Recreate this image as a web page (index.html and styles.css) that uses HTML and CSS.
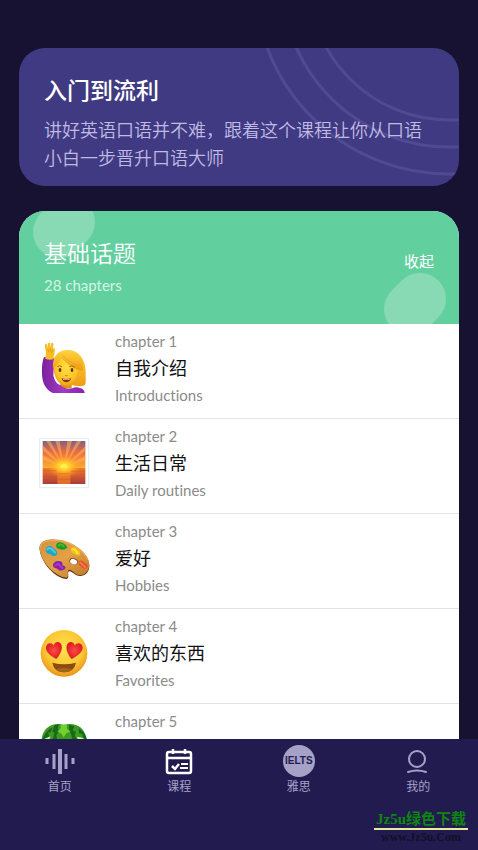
FILE: index.html
```
<!DOCTYPE html>
<html lang="zh-CN">
<head>
    <meta charset="UTF-8">
    <meta name="viewport" content="width=device-width, initial-scale=1">
    <title>课程</title>
    <link rel="stylesheet" href="styles.css">
</head>
<body>
    <main class="content">
        <section class="intro">
            <svg class="intro-rings" viewBox="0 0 180 138" aria-hidden="true">
                <circle cx="170" cy="-68" r="194"/>
                <circle cx="170" cy="-68" r="167"/>
                <circle cx="170" cy="-68" r="140"/>
            </svg>
            <h1>入门到流利</h1>
            <p>讲好英语口语并不难，跟着这个课程让你从口语小白一步晋升口语大师</p>
        </section>

        <section class="topic">
            <div class="topic-head">
                <svg class="blob blob-left" viewBox="0 0 100 113" aria-hidden="true">
                    <path d="M50 11L40 21"/>
                </svg>
                <svg class="blob blob-right" viewBox="0 0 100 113" aria-hidden="true">
                    <path d="M61 88L51 98"/>
                </svg>
                <div class="topic-title">
                    <h2>基础话题</h2>
                    <p>28 chapters</p>
                </div>
                <button class="toggle" type="button">收起</button>
            </div>
            <ul class="chapters">
                <li>
                    <svg class="emoji" viewBox="57 54 156 156" aria-hidden="true">
                        <defs>
                            <linearGradient id="hair" x1="0" y1="0" x2="0" y2="1">
                                <stop offset="0" stop-color="#ffd440"/>
                                <stop offset="1" stop-color="#f09c12"/>
                            </linearGradient>
                            <radialGradient id="face" cx=".5" cy=".4" r=".6">
                                <stop offset="0" stop-color="#ffdf45"/>
                                <stop offset=".7" stop-color="#fcc427"/>
                                <stop offset="1" stop-color="#e99a18"/>
                            </radialGradient>
                            <linearGradient id="sleeve" x1="0" y1="0" x2="1" y2="0">
                                <stop offset="0" stop-color="#7a219d"/>
                                <stop offset=".5" stop-color="#a13bc4"/>
                                <stop offset="1" stop-color="#8424aa"/>
                            </linearGradient>
                        </defs>
                        <path d="M100 132C94 98 112 76 140 75C176 73 198 104 197 142C196 162 200 172 194 181C181 186 163 184 152 178L110 160Z" fill="url(#hair)"/>
                        <path d="M121 166H155V190H121Z" fill="#df8f14"/>
                        <path d="M72 96C65 114 65 139 67 158C70 184 85 197 98 204H194C194 194 184 187 164 187C147 196 130 189 121 180C109 177 103 165 100 151L103 100Z" fill="url(#sleeve)"/>
                        <path d="M76 101L78 82L74 61Q75 55 80 57L84 70L83 53Q87 47 90 53L91 69L94 53Q99 50 100 57L99 74L101 69Q107 70 104 80L100 103Q87 106 76 101Z" fill="#f9bd24"/>
                        <path d="M84 72L86 82M91 70V80M98 74L94 84" fill="none" stroke="#df8e14" stroke-width="2"/>
                        <path d="M101 130C100 101 114 87 139 88C165 90 179 107 178 135C176 167 162 184 140 184C118 182 102 160 101 130Z" fill="url(#face)"/>
                        <path d="M99 128C96 98 114 76 143 76C173 77 193 101 189 137C167 135 140 119 124 95C120 109 112 122 99 128Z" fill="url(#hair)"/>
                        <path d="M125 96Q145 122 182 133M127 91Q151 115 184 124" fill="none" stroke="#e99b13" stroke-width="2"/>
                        <ellipse cx="120" cy="135" rx="4" ry="6" fill="#573017"/>
                        <ellipse cx="156" cy="135" rx="4" ry="6" fill="#573017"/>
                        <path d="M112 125Q119 120 126 125M148 125Q156 120 164 126" fill="none" stroke="#a96714" stroke-width="3"/>
                        <path d="M135 151Q139 154 143 151" fill="none" stroke="#cc8115" stroke-width="3"/>
                        <path d="M124 160Q139 164 154 160Q149 172 139 172Q129 172 124 160Z" fill="#85340e"/>
                        <path d="M128 162Q139 165 150 162L147 165H131Z" fill="#fff"/>
                    </svg>
                    <div class="chapter-text">
                        <span>chapter 1</span>
                        <h3>自我介绍</h3>
                        <span>Introductions</span>
                    </div>
                </li>
                <li>
                    <svg class="emoji" viewBox="57 54 156 156" aria-hidden="true">
                        <defs>
                            <linearGradient id="sky" x1="0" y1="0" x2="0" y2="1">
                                <stop offset="0" stop-color="#805e83"/>
                                <stop offset=".4" stop-color="#e96c42"/>
                                <stop offset="1" stop-color="#ffac26"/>
                            </linearGradient>
                            <linearGradient id="sea" x1="0" y1="0" x2="0" y2="1">
                                <stop offset="0" stop-color="#f27b24"/>
                                <stop offset="1" stop-color="#a93c39"/>
                            </linearGradient>
                            <radialGradient id="glow">
                                <stop offset="0" stop-color="#fff44a"/>
                                <stop offset=".4" stop-color="#ffc927" stop-opacity=".9"/>
                                <stop offset="1" stop-color="#ff8b28" stop-opacity="0"/>
                            </radialGradient>
                        </defs>
                        <path d="M59 55H206V203H59Z" fill="#fff" stroke="#cfe2e9" stroke-width="2"/>
                        <path d="M68 63H196V143H68Z" fill="url(#sky)"/>
                        <path d="M132 142L68 76V91ZM132 142L68 105V119ZM132 142L78 63H91ZM132 142L106 63H119ZM132 142L142 63H156ZM132 142L171 63H184ZM132 142L196 79V92ZM132 142L196 108V121Z" fill="#ffb45b" opacity=".55"/>
                        <path d="M68 143H196V192H68Z" fill="url(#sea)"/>
                        <path d="M112 143H151V192H112Z" fill="#f47d24" opacity=".75"/>
                        <ellipse cx="132" cy="139" rx="54" ry="35" fill="url(#glow)"/>
                        <path d="M119 143Q132 121 145 143Z" fill="#fff345"/>
                        <path d="M68 152H109M153 154H196M68 169H105M158 173H196M116 161H148M112 178H151" stroke="#c8532d" stroke-width="3" opacity=".4"/>
                    </svg>
                    <div class="chapter-text">
                        <span>chapter 2</span>
                        <h3>生活日常</h3>
                        <span>Daily routines</span>
                    </div>
                </li>
                <li>
                    <svg class="emoji" viewBox="57 54 156 156" aria-hidden="true">
                        <defs>
                            <linearGradient id="wood" x1="0" y1="0" x2="1" y2="1">
                                <stop offset="0" stop-color="#d39440"/>
                                <stop offset=".5" stop-color="#e3a044"/>
                                <stop offset="1" stop-color="#c07826"/>
                            </linearGradient>
                        </defs>
                        <path d="M59 105C54 76 87 69 123 77C167 86 208 118 208 153C208 173 194 183 181 183C166 184 157 169 148 169C139 169 151 190 140 192C107 191 64 145 59 105Z" fill="#60381c"/>
                        <path d="M59 101C57 74 87 69 123 75C165 83 208 117 208 148C208 167 195 180 182 180C166 181 158 165 149 164C137 164 151 187 139 188C106 184 62 141 59 101Z" fill="url(#wood)"/>
                        <path d="M61 98C63 77 88 74 123 78C158 84 190 107 203 134" fill="none" stroke="#f4bd65" stroke-width="2"/>
                        <ellipse cx="161" cy="139" rx="13" ry="9" fill="#633517" transform="rotate(18 161 139)"/>
                        <ellipse cx="161" cy="140" rx="11" ry="8" fill="#fff" transform="rotate(18 161 140)"/>
                        <path d="M77 101Q81 91 94 94Q99 99 107 104Q117 117 106 122Q97 126 91 118Q76 117 77 101Z" fill="#1fa6c4"/>
                        <path d="M82 103Q87 97 96 103L105 112" fill="none" stroke="#57c8dd" stroke-width="6" stroke-linecap="round"/>
                        <path d="M109 88Q115 78 128 84Q140 89 142 98Q130 108 118 102Q106 100 109 88Z" fill="#219827"/>
                        <path d="M116 91Q124 85 131 94" fill="none" stroke="#46bb30" stroke-width="6" stroke-linecap="round"/>
                        <path d="M153 99Q164 92 172 103Q183 109 180 121Q171 124 162 116Q150 111 153 99Z" fill="#f2c31b"/>
                        <path d="M158 103Q166 101 172 115" fill="none" stroke="#ffdf35" stroke-width="6" stroke-linecap="round"/>
                        <path d="M176 139Q186 132 194 144Q208 150 201 159Q191 165 182 154Q174 150 176 139Z" fill="#e0502b"/>
                        <path d="M181 143L196 157" stroke="#f7764f" stroke-width="6" stroke-linecap="round"/>
                        <path d="M99 148Q107 134 120 139Q130 141 127 151Q142 155 134 163Q120 171 112 161Q97 159 99 148Z" fill="#8920aa"/>
                        <path d="M107 151Q115 143 120 152L127 159" fill="none" stroke="#a63cc4" stroke-width="6" stroke-linecap="round"/>
                    </svg>
                    <div class="chapter-text">
                        <span>chapter 3</span>
                        <h3>爱好</h3>
                        <span>Hobbies</span>
                    </div>
                </li>
                <li>
                    <svg class="emoji" viewBox="57 54 156 156" aria-hidden="true">
                        <defs>
                            <radialGradient id="smiley" cx=".5" cy=".4" r=".6">
                                <stop offset="0" stop-color="#ffe34e"/>
                                <stop offset=".65" stop-color="#fdc735"/>
                                <stop offset="1" stop-color="#e9951d"/>
                            </radialGradient>
                            <radialGradient id="heart">
                                <stop offset="0" stop-color="#ff4c42"/>
                                <stop offset="1" stop-color="#db1c25"/>
                            </radialGradient>
                        </defs>
                        <circle cx="132" cy="130" r="70" fill="url(#smiley)"/>
                        <path d="M109 147C94 140 76 127 78 112C80 98 94 96 101 106C106 92 122 93 125 107C128 121 117 138 109 147Z" fill="url(#heart)"/>
                        <path d="M155 147C147 138 137 121 140 107C144 93 160 93 164 106C172 95 187 99 188 112C189 127 170 140 155 147Z" fill="url(#heart)"/>
                        <path d="M97 158Q132 167 168 158Q163 186 132 187Q102 186 97 158Z" fill="#8a4b10"/>
                        <path d="M107 178Q132 168 158 178Q147 187 132 187Q117 187 107 178Z" fill="#a5621a"/>
                    </svg>
                    <div class="chapter-text">
                        <span>chapter 4</span>
                        <h3>喜欢的东西</h3>
                        <span>Favorites</span>
                    </div>
                </li>
                <li>
                    <svg class="emoji" viewBox="57 54 156 156" aria-hidden="true">
                        <path d="M65 115C63 82 80 62 106 58Q120 56 132 60Q146 55 160 58C186 62 200 84 199 115Z" fill="#3f9a22"/>
                        <path d="M66 104Q79 75 98 67L91 83L84 82L88 95L76 107ZM104 60L117 58L113 72L119 77L109 91L111 103H98L103 84L97 79ZM147 59L163 64L158 75L168 81L164 91L172 104H157L153 86L147 78ZM176 70Q195 80 201 103L189 101L187 88L177 84Z" fill="#17691b"/>
                        <path d="M122 59V70L112 80L123 85L131 97L140 84L152 80L141 71V58Z" fill="#72cf32"/>
                        <path d="M70 103L91 94L88 107ZM171 95L190 99L192 106H174Z" fill="#d3efaa"/>
                    </svg>
                    <div class="chapter-text">
                        <span>chapter 5</span>
                    </div>
                </li>
            </ul>
        </section>
    </main>

    <footer class="bottom">
        <nav class="tabs">
            <a href="#home">
                <svg class="tab-icon" viewBox="0 0 32 32" aria-hidden="true">
                    <path d="M3 13V19M10 9V24M22 9V24M29 13V19" fill="none" stroke="currentColor" stroke-width="3"/>
                    <path d="M16 4V29" fill="none" stroke="currentColor" stroke-width="4"/>
                </svg>
                <span>首页</span>
            </a>
            <a class="active" href="#course">
                <svg class="tab-icon" viewBox="0 0 32 32" fill="none" stroke="currentColor" aria-hidden="true">
                    <rect x="4" y="7" width="24" height="21" rx="2" stroke-width="2.5"/>
                    <path d="M4 13H28M10 4V9M22 4V9" stroke-width="2.5"/>
                    <path d="M9 21L12 24L16 19" stroke-width="2.5"/>
                    <path d="M18 19H25M17 23H25" stroke-width="2"/>
                </svg>
                <span>课程</span>
            </a>
            <a href="#ielts">
                <b class="tab-icon ielts">IELTS</b>
                <span>雅思</span>
            </a>
            <a href="#me">
                <svg class="tab-icon" viewBox="0 0 32 32" fill="none" stroke="currentColor" stroke-width="2" aria-hidden="true">
                    <circle cx="15" cy="14" r="8"/>
                    <path d="M6 27Q15 24 24 27" stroke-linecap="round"/>
                </svg>
                <span>我的</span>
            </a>
        </nav>
        <div class="site-mark">
            <strong>Jz5u绿色下载</strong>
            <span>www.Jz5u.Com</span>
        </div>
    </footer>
</body>
</html>
```

FILE: styles.css
```
*{
    padding: 0;
    margin: 0;
    box-sizing: border-box;
}
body{
    display: flex;
    flex-direction: column;
    height: 100vh;
    background-color: #171232;
    font-family: Lato, "Noto Sans CJK SC", sans-serif;
    font-variant-ligatures: none;
    overflow: hidden;
}
ul{
    list-style: none;
}
a{
    text-decoration: none;
}

/* 课程内容 */
.content{
    flex: 1;
    min-height: 0;
    padding: 48px 19px 0;
    overflow: hidden;
}
.intro{
    position: relative;
    margin-bottom: 25px;
    padding: 25px 25px 14px;
    border-radius: 26px;
    background-color: #403a82;
    overflow: hidden;
}
.intro-rings{
    position: absolute;
    top: 0;
    right: 0;
    width: 180px;
    height: 138px;
    fill: none;
    stroke: #504a93;
    stroke-width: 3;
    overflow: visible;
}
.intro h1{
    position: relative;
    margin-bottom: 9px;
    color: #fff;
    font-size: 23px;
    font-weight: 500;
    line-height: 34px;
}
.intro p{
    position: relative;
    color: #c0bbe4;
    font-size: 18px;
    font-weight: 350;
    line-height: 28px;
}

.topic{
    border-radius: 26px 26px 0 0;
    background-color: #fff;
    overflow: hidden;
}
.topic-head{
    position: relative;
    display: flex;
    justify-content: space-between;
    align-items: flex-start;
    padding: 25px 25px 24px;
    background-color: #61d09e;
    color: #fff;
    overflow: hidden;
}
.blob{
    position: absolute;
    top: 0;
    width: 100px;
    height: 113px;
    stroke: #87dab3;
    stroke-width: 52;
    stroke-linecap: round;
}
.blob-left{
    left: 0;
}
.blob-right{
    right: 0;
}
.topic-title{
    position: relative;
}
.topic-title h2{
    font-size: 23px;
    font-weight: 350;
    line-height: 34px;
}
.topic-title p{
    color: #d5f5e5;
    font-size: 15px;
    line-height: 30px;
}
.toggle{
    position: relative;
    padding: 13px 0;
    border: none;
    background: none;
    color: #fff;
    font-family: inherit;
    font-size: 15px;
    line-height: 24px;
    cursor: pointer;
}

.chapters li{
    display: flex;
    align-items: center;
    gap: 24px;
    min-height: 95px;
    padding: 4px 20px 9px;
    border-bottom: 1px solid #e3e3e5;
}
.emoji{
    flex: none;
    width: 52px;
    height: 52px;
}
.chapter-text{
    align-self: flex-start;
    color: #8b8b8b;
    font-size: 15px;
    line-height: 27px;
}
.chapter-text span{
    display: block;
}
.chapter-text h3{
    color: #111;
    font-size: 18px;
    font-weight: 400;
    line-height: 27px;
}

/* 底部导航 */
.bottom{
    display: flex;
    flex-direction: column;
    justify-content: space-between;
    flex: none;
    min-height: 111px;
    padding: 6px 0;
    background-color: #211b50;
}
.tabs{
    display: grid;
    grid-template-columns: repeat(4, 1fr);
}
.tabs a{
    display: flex;
    flex-direction: column;
    align-items: center;
    color: #a6a2c7;
    font-size: 12px;
    line-height: 20px;
}
.tabs .active svg{
    color: #fff;
}
.tab-icon{
    width: 32px;
    height: 32px;
}
.ielts{
    border-radius: 50%;
    background-color: #a6a2c7;
    color: #211b50;
    font-family: "Liberation Sans", Arial, sans-serif;
    font-size: 10px;
    font-weight: bold;
    line-height: 32px;
    text-align: center;
}
.site-mark{
    display: flex;
    flex-direction: column;
    align-self: flex-end;
    margin-right: 10px;
    text-align: center;
    font-family: "Liberation Serif", "Noto Sans CJK SC", serif;
}
.site-mark strong{
    padding: 2px 2px 0;
    border-bottom: 2px solid #e5eca0;
    color: #0d860f;
    font-size: 15px;
    line-height: 18px;
}
.site-mark span{
    color: #111026;
    font-size: 12px;
    font-weight: bold;
    line-height: 14px;
}
```
